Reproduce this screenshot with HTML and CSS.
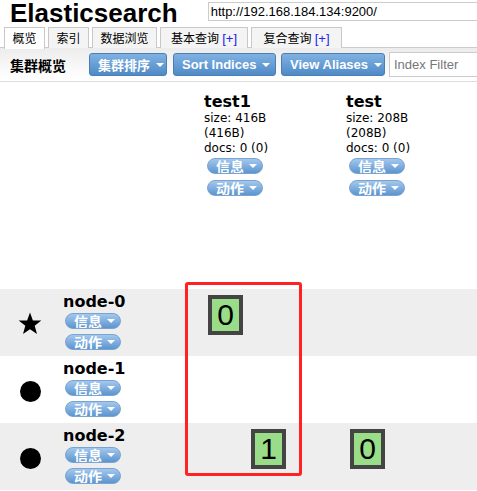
FILE: index.html
```html
<!DOCTYPE html>
<html>
<head>
<meta charset="utf-8">
<link rel="stylesheet" href="styles.css">
</head>
<body>
<div class="header">
  <h1 class="title">Elasticsearch</h1>
  <input class="url" type="text" value="http://192.168.184.134:9200/">
</div>
<div class="tabs">
  <div class="tab active">概览</div>
  <div class="tab">索引</div>
  <div class="tab">数据浏览</div>
  <div class="tab">基本查询 <span class="plus">[+]</span></div>
  <div class="tab">复合查询 <span class="plus">[+]</span></div>
</div>
<div class="toolbar">
  <span class="tb-label">集群概览</span>
  <button class="tbtn">集群排序 <i class="caret"></i></button>
  <button class="tbtn">Sort Indices <i class="caret"></i></button>
  <button class="tbtn">View Aliases <i class="caret"></i></button>
  <input class="filter" type="text" placeholder="Index Filter">
</div>
<div class="grid">
  <div class="hrow">
    <div class="ncell"></div>
    <div class="icol">
      <div class="iname">test1</div>
      <div class="itext">size: 416B<br>(416B)<br>docs: 0 (0)</div>
      <button class="pill">信息 <i class="caret"></i></button>
      <button class="pill">动作 <i class="caret"></i></button>
    </div>
    <div class="icol">
      <div class="iname">test</div>
      <div class="itext">size: 208B<br>(208B)<br>docs: 0 (0)</div>
      <button class="pill">信息 <i class="caret"></i></button>
      <button class="pill">动作 <i class="caret"></i></button>
    </div>
  </div>
  <div class="nrow shade">
    <div class="ncell">
      <div class="nicon"><svg class="star" width="24" height="23" viewBox="0 0 24 23"><path d="M12 0.5 L14.9 8.4 L23.3 8.6 L16.7 13.8 L19 21.9 L12 17.2 L5 21.9 L7.3 13.8 L0.7 8.6 L9.1 8.4 Z" fill="#000"/></svg></div>
      <div class="ninfo">
        <div class="nname">node-0</div>
        <button class="pill">信息 <i class="caret"></i></button>
        <button class="pill">动作 <i class="caret"></i></button>
      </div>
    </div>
    <div class="scol"><div class="shard">0</div></div>
    <div class="scol"></div>
  </div>
  <div class="nrow">
    <div class="ncell">
      <div class="nicon"><span class="dot"></span></div>
      <div class="ninfo">
        <div class="nname">node-1</div>
        <button class="pill">信息 <i class="caret"></i></button>
        <button class="pill">动作 <i class="caret"></i></button>
      </div>
    </div>
    <div class="scol"></div>
    <div class="scol"></div>
  </div>
  <div class="nrow shade">
    <div class="ncell">
      <div class="nicon"><span class="dot"></span></div>
      <div class="ninfo">
        <div class="nname">node-2</div>
        <button class="pill">信息 <i class="caret"></i></button>
        <button class="pill">动作 <i class="caret"></i></button>
      </div>
    </div>
    <div class="scol"><div class="shard slot2">1</div></div>
    <div class="scol"><div class="shard">0</div></div>
  </div>
  <div class="mark"></div>
</div>
</body>
</html>
```
FILE: styles.css
```css
* { box-sizing: border-box; }
html, body { margin: 0; padding: 0; background: #fff; overflow: hidden; }
body { width: 477px; height: 491px; font-family: "Liberation Sans", "Noto Sans CJK SC", sans-serif; color: #000; }

.header { display: flex; align-items: flex-start; height: 27px; }
.title { margin: 0 0 0 10px; font-size: 26px; font-weight: bold; line-height: 27px; height: 27px; flex: none; }
.url { margin: 2px 0 0 30px; flex: 1; min-width: 0; height: 19px; border: 1px solid #ccc; border-right: none; padding: 0 2px; font: 13px "Liberation Sans", sans-serif; color: #000; }

.tabs { display: flex; height: 21px; padding-left: 4px; gap: 3px; border-bottom: 1px solid #ccc; }
.tab { flex: none; height: 21px; padding: 2px 0 0 0; text-align: center; border: 1px solid #c8c8c8; border-bottom: none; background: #f4f4f4; font-size: 12px; line-height: 18px; white-space: nowrap; }
.tab:nth-child(1) { width: 41px; }
.tab:nth-child(2) { width: 41px; }
.tab:nth-child(3) { width: 65px; }
.tab:nth-child(4) { width: 88px; }
.tab:nth-child(5) { width: 91px; }
.tab.active { background: #fff; height: 22px; margin-bottom: -1px; }
.plus { color: #2222ee; font-size: 13px; }

.toolbar { display: flex; align-items: center; height: 34px; padding-left: 10px; gap: 6px; background: linear-gradient(#ececec, #fbfbfb 70%, #fff); border-bottom: 1px solid #ddd; overflow: hidden; }
.tb-label { flex: none; white-space: nowrap; font-size: 14px; font-weight: bold; margin-right: 17px; }
.tbtn { flex: none; height: 23px; padding: 0 0 0 8px; border: 1px solid #4a7fb5; border-radius: 3px; background: linear-gradient(#80b2e3, #4f8ac6); color: #fff; font: bold 13px "Liberation Sans", "Noto Sans CJK SC", sans-serif; display: flex; align-items: center; gap: 6px; white-space: nowrap; }
.tbtn:nth-of-type(1) { width: 78px; }
.tbtn:nth-of-type(2) { width: 103px; }
.tbtn:nth-of-type(3) { width: 104px; margin-left: -1px; }
.caret { flex: none; display: inline-block; width: 0; height: 0; border-left: 4px solid transparent; border-right: 4px solid transparent; border-top: 4px solid #fff; }
.filter { flex: none; width: 100px; margin-left: -2px; height: 25px; border: 1px solid #ccc; border-right: none; padding: 0 4px; font: 13px "Liberation Sans", sans-serif; }
.filter::placeholder { color: #777; }

.grid { position: relative; }
.hrow { display: flex; height: 207px; }
.ncell { flex: none; width: 200px; display: flex; }
.icol { flex: none; width: 142px; padding: 10px 0 0 4px; display: flex; flex-direction: column; align-items: flex-start; }
.iname { font: bold 16px "DejaVu Sans", sans-serif; line-height: 19px; }
.itext { font: 12px "DejaVu Sans", sans-serif; line-height: 15px; margin-bottom: 1px; white-space: nowrap; }
.pill { flex: none; height: 16px; width: 56px; margin: 1px 0 0 3px; padding: 0 0 0 8px; border: 1px solid #7aa3cf; border-radius: 8px; background: linear-gradient(#a3c8ee, #5d95cf); color: #fff; font: bold 14px "Noto Sans CJK SC", sans-serif; line-height: 14px; display: flex; align-items: flex-start; gap: 5px; overflow: hidden; white-space: nowrap; }
.pill .caret { margin-top: 5px; }
.pill + .pill { margin-top: 6px; }

.nrow { display: flex; height: 67px; }
.nrow.shade { background: #eeeeee; }
.nicon { flex: none; width: 63px; display: flex; align-items: center; justify-content: center; padding-top: 2px; }
.star { margin-left: -3px; }
.dot { width: 21px; height: 21px; border-radius: 50%; background: #000; margin-left: -3px; margin-top: 2px; }
.ninfo { padding-top: 3px; display: flex; flex-direction: column; align-items: flex-start; }
.nname { font: bold 16px "DejaVu Sans", sans-serif; line-height: 19px; }
.ninfo .pill { margin-left: 2px; margin-top: 2px; }
.ninfo .pill + .pill { margin-top: 5px; }

.scol { flex: none; width: 142px; padding: 6px 0 0 8px; }
.shard { width: 35px; height: 40px; border: 4px solid #444; background: #99dd88; font: 30px "Liberation Sans", sans-serif; line-height: 32px; text-align: center; }
.shard.slot2 { margin-left: 43px; }

.mark { position: absolute; left: 185px; top: 200px; width: 117px; height: 194px; border: 3px solid #f22; border-radius: 3px; }
```
